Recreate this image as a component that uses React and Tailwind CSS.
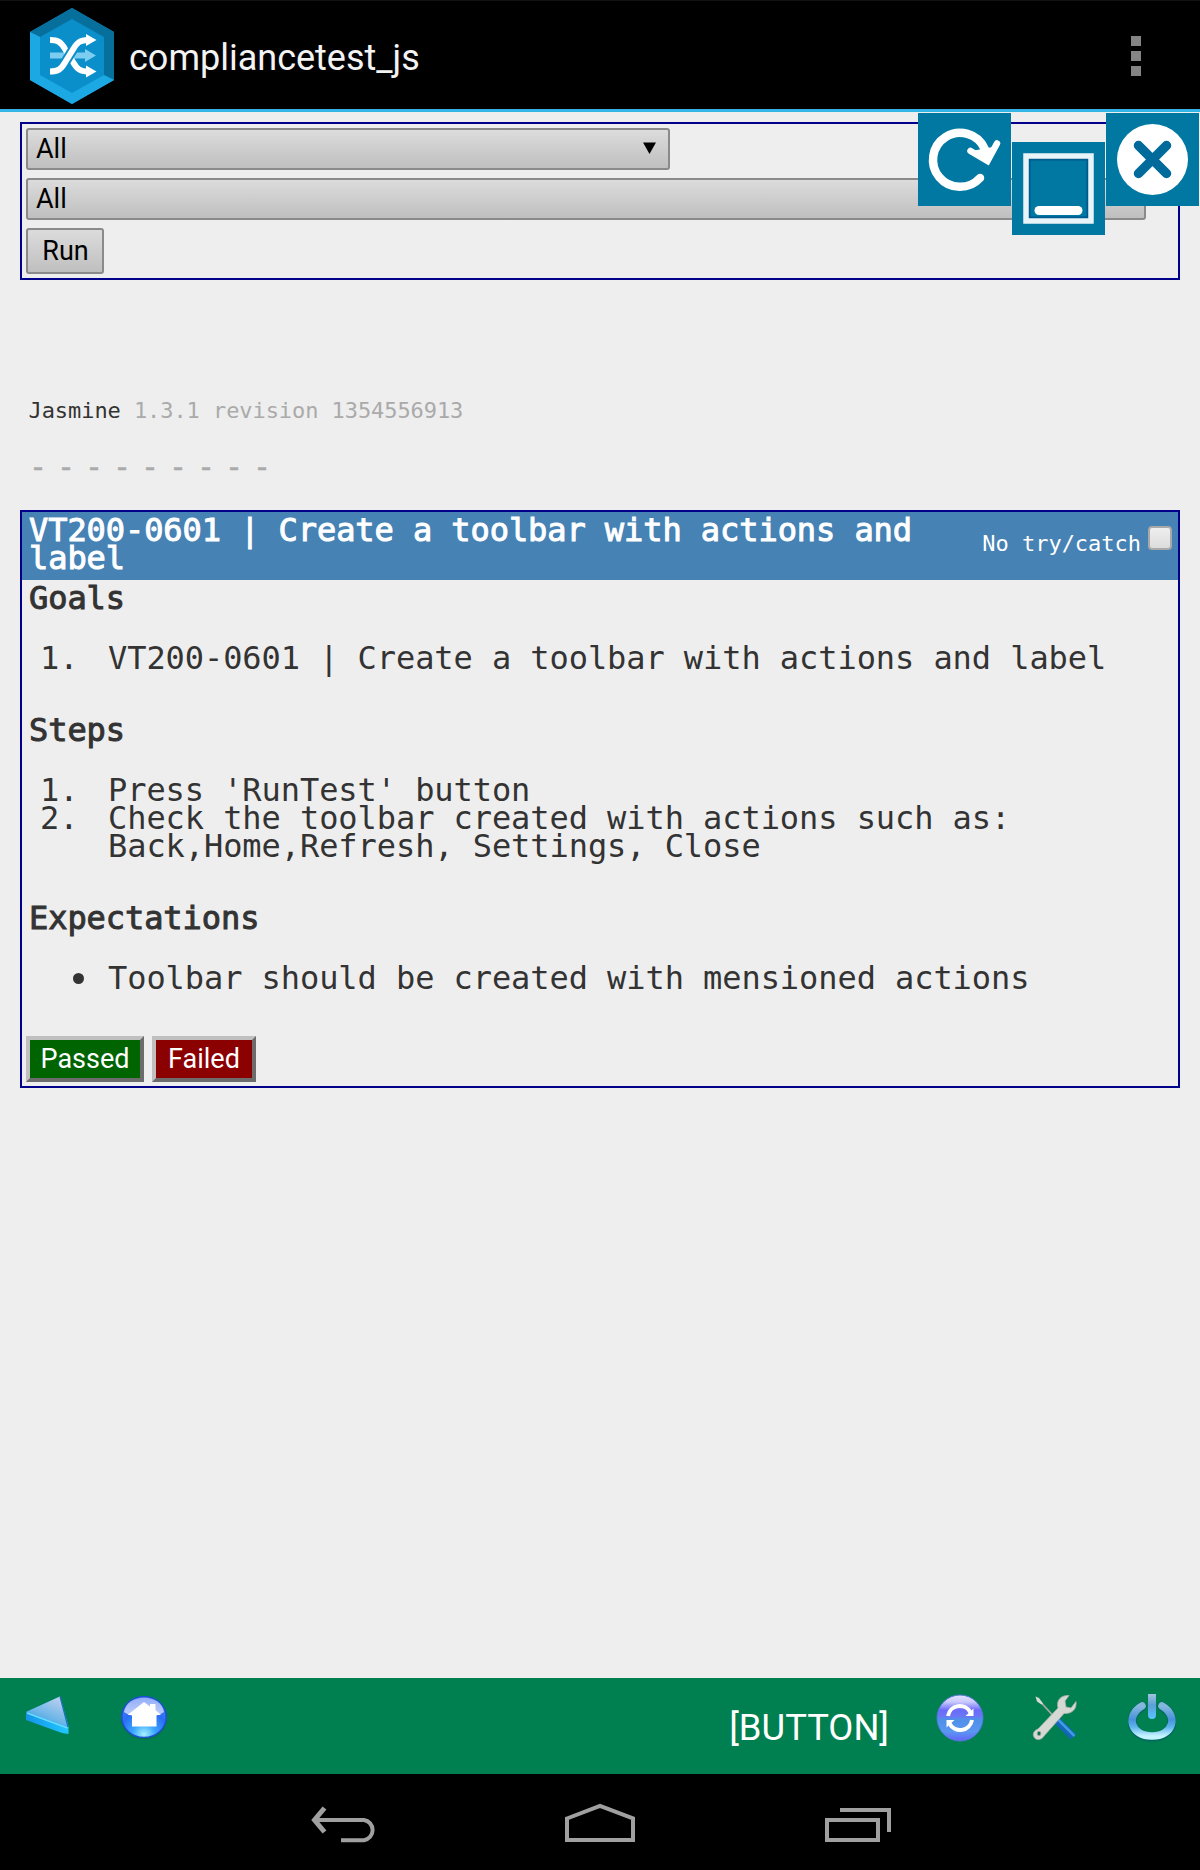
import React from "react";

function AppLogo() {
  return (
    <svg width="84" height="96" viewBox="0 0 84 96" className="mt-0.5 block">
      <polygon points="42,0 84,24 84,72 42,96 0,72 0,24" fill="#0a8fcb" />
      <polygon points="42,0 84,24 84,72 74,67 74,29 42,11 10,29 0,24" fill="#066f9c" />
      <polygon points="0,24 10,29 10,67 42,85 74,67 84,72 42,96 0,72" fill="#1ca9e3" />
      <g fill="none" strokeWidth="6">
        <path d="M20 47.500H58" stroke="#7ccdf0" />
        <path d="M55 41l11 6.500l-11 6.500z" fill="#7ccdf0" stroke="none" />
        <path d="M20 32c8 0 11 2 15 9l8 13c4 7 7 9.500 15 9.500" stroke="#fff" />
        <path d="M20 63.500c8 0 11-2 15-9l8-13c4-7 7-9.500 15-9.500" stroke="#0a8fcb" strokeWidth="10" strokeDasharray="0 18 24 60" />
        <path d="M20 63.500c8 0 11-2 15-9l8-13c4-7 7-9.500 15-9.500" stroke="#fff" />
      </g>
      <path d="M56 26l10.500 6l-10.500 6z M56 57.500l10.500 6l-10.500 6z" fill="#fff" />
    </svg>
  );
}

function ReloadButton() {
  return (
    <button className="size-[93px] bg-[#0078a2]">
      <svg width="93" height="93" viewBox="0 0 93 93" fill="none" stroke="#fff" strokeLinecap="round" className="block">
        <path d="M62 65A27 27 0 1 1 66.500 35.500L69.500 43" strokeWidth="8.500" />
        <path d="M52.500 38L69.500 48L79 30.500" strokeWidth="6.500" strokeLinejoin="miter" />
        <path d="M58.500 38L69.500 46L74.500 35z" fill="#fff" strokeWidth="2" />
      </svg>
    </button>
  );
}

function MinimizeButton() {
  return (
    <button className="mt-[29px] size-[93px] bg-[#0078a2]">
      <svg width="93" height="93" viewBox="0 0 93 93" fill="none" className="block">
        <rect x="17" y="17" width="59" height="59" stroke="#00598f" strokeWidth="3" />
        <rect x="14" y="14" width="65" height="65" stroke="#e9f4f8" strokeWidth="5.500" />
        <path d="M27 68.500H66" stroke="#fff" strokeWidth="9" strokeLinecap="round" />
      </svg>
    </button>
  );
}

function CloseButton() {
  return (
    <button className="size-[93px] bg-[#0078a2]">
      <svg width="93" height="93" viewBox="0 0 93 93" className="block">
        <circle cx="46.500" cy="46.500" r="35.500" fill="#fff" />
        <path d="M32.500 32.500L60.500 60.500M60.500 32.500L32.500 60.500" stroke="#006a9b" strokeWidth="9.500" strokeLinecap="round" />
      </svg>
    </button>
  );
}

function SelectBox({ className, arrow }) {
  return (
    <div className={"flex h-[42px] items-center justify-between rounded-[3px] border-2 border-[#8a8a8a] bg-linear-to-b from-[#dcdcdc] to-[#bfbfbf] pr-3 pl-2 text-[27px] leading-[38px] text-black " + className}>
      <span>All</span>
      {arrow && (
        <svg width="13" height="12" viewBox="0 0 13 12" className="mb-0.5">
          <path d="M0 0.500H13L6.500 12z" fill="#000" />
        </svg>
      )}
    </div>
  );
}

function Heading({ children, className }) {
  return <h3 className={"pl-px [-webkit-text-stroke:1px_currentColor] " + className}>{children}</h3>;
}

function BackIcon() {
  return (
    <svg width="48" height="48" viewBox="0 0 48 48" className="block">
      <defs>
        <linearGradient id="backTop" x1="0" y1="1" x2="0.600" y2="0">
          <stop offset="0" stopColor="#1e8fe6" />
          <stop offset="0.500" stopColor="#6db6e8" />
          <stop offset="1" stopColor="#b5cdec" />
        </linearGradient>
        <linearGradient id="backSide" x1="0" y1="0" x2="1" y2="0">
          <stop offset="0" stopColor="#1593ea" />
          <stop offset="1" stopColor="#20c8ff" />
        </linearGradient>
      </defs>
      <path d="M2 18L36 2.500L44.500 32V40L38 39L2 26z" fill="url(#backSide)" />
      <path d="M2 18L36 2.500L44 33z" fill="url(#backTop)" />
      <path d="M36 2.500L44 33" stroke="#1a6fc4" strokeWidth="1.200" />
      <path d="M3 19L43.500 34" stroke="#6bdcff" strokeWidth="1.500" />
    </svg>
  );
}

function HomeIcon() {
  return (
    <svg width="48" height="48" viewBox="0 0 48 48" className="block">
      <defs>
        <radialGradient id="homeFill" cx="0.500" cy="0.920" r="0.850">
          <stop offset="0" stopColor="#a5f2ff" />
          <stop offset="0.300" stopColor="#3ba6ff" />
          <stop offset="0.650" stopColor="#2a6df4" />
          <stop offset="1" stopColor="#4a7df0" />
        </radialGradient>
        <linearGradient id="homeShine" x1="0" y1="0" x2="0" y2="1">
          <stop offset="0" stopColor="#93adf8" />
          <stop offset="1" stopColor="#c5d4fc" />
        </linearGradient>
      </defs>
      <ellipse cx="24" cy="24" rx="23" ry="21.500" fill="#0a5a50" opacity="0.500" />
      <ellipse cx="24" cy="23" rx="22.300" ry="20.500" fill="url(#homeFill)" stroke="#1c50cf" strokeWidth="1.500" />
      <path d="M4 18C7 -1 41 -1 44 18C34 25 14 25 4 18z" fill="url(#homeShine)" />
      <path d="M24 8L30 12.500V10H35.500V16L41 21H36.500V32.500H12V21H7.500z" fill="#fff" />
    </svg>
  );
}

function RefreshIcon() {
  return (
    <svg width="48" height="48" viewBox="0 0 48 48" className="block">
      <defs>
        <linearGradient id="refreshFill" x1="0" y1="0" x2="0" y2="1">
          <stop offset="0" stopColor="#e2e2ff" />
          <stop offset="0.150" stopColor="#c9c9ff" />
          <stop offset="0.330" stopColor="#6a6af8" />
          <stop offset="0.470" stopColor="#6a78f4" />
          <stop offset="0.520" stopColor="#4f90e8" />
          <stop offset="0.800" stopColor="#5b96f2" />
          <stop offset="1" stopColor="#6464fa" />
        </linearGradient>
      </defs>
      <circle cx="24" cy="24" r="23" fill="url(#refreshFill)" stroke="#5577d8" strokeWidth="1" />
      <path d="M12 22A12 12 0 0 1 34.500 18.500M36 26A12 12 0 0 1 13.500 29.500" fill="none" stroke="#fff" strokeWidth="4" />
      <path d="M37.500 14.500V22H29.500zM10.500 33.500V26H18.500z" fill="#fff" />
    </svg>
  );
}

function ToolsIcon() {
  return (
    <svg width="48" height="48" viewBox="0 0 48 48" className="block">
      <path d="M5 4L24 25" stroke="#a9a9a5" strokeWidth="1.800" />
      <path d="M3.500 2.500L7 4L11 9.500L9.500 10.500L5 7.500z" fill="#d8dad6" />
      <path d="M23.500 25L41.500 43" stroke="#1566b4" strokeWidth="7.500" />
      <path d="M24.500 24L42.500 42" stroke="#3f9be4" strokeWidth="2.500" />
      <path d="M26 14C24 6 29 1 37 1.500L33 7L34 13L39 14L44 7.500C45 15 40 20 32 19.500L12 42C10 46 4 47 2 43C0 39 3 36 6 35z" fill="#d6d8d4" stroke="#aeb0ac" strokeWidth="0.800" />
      <ellipse cx="7" cy="39.500" rx="1.800" ry="2.200" fill="#087748" stroke="#a5a7a3" strokeWidth="0.800" />
    </svg>
  );
}

function PowerIcon() {
  return (
    <svg width="48" height="48" viewBox="0 0 48 48" className="block">
      <defs>
        <linearGradient id="ringFill" x1="0" y1="0" x2="0" y2="1">
          <stop offset="0" stopColor="#86b8df" />
          <stop offset="0.450" stopColor="#4792d8" />
          <stop offset="0.700" stopColor="#5fb4ee" />
          <stop offset="1" stopColor="#c5f3ff" />
        </linearGradient>
        <linearGradient id="stemFill" x1="0" y1="0" x2="0" y2="1">
          <stop offset="0" stopColor="#a0c4e0" />
          <stop offset="0.450" stopColor="#5a9fd6" />
          <stop offset="1" stopColor="#5cc3ff" />
        </linearGradient>
      </defs>
      <path d="M14 12.500C-3 23 3 43 24 43C45 43 51 23 34 12.500" fill="none" stroke="#075d68" strokeWidth="9.500" strokeLinecap="round" opacity="0.600" />
      <path d="M14 12C-3 22 3 42 24 42C45 42 51 22 34 12" fill="none" stroke="url(#ringFill)" strokeWidth="7.500" strokeLinecap="round" />
      <path d="M20 0H28V21a4 4 0 0 1-8 0z" fill="url(#stemFill)" />
    </svg>
  );
}

export default function App() {
  return (
    <div className="relative flex h-[1870px] w-[1200px] flex-col overflow-hidden bg-[#eeeeee] font-['Roboto',sans-serif]">
      <header className="flex h-28 shrink-0 items-center justify-between border-t border-b-[3px] border-t-[#111] border-b-[#33b5e5] bg-black pr-[59px] pl-[30px]">
        <div className="flex items-center gap-[15px]">
          <AppLogo />
          <h1 className="pt-[5px] text-[36px] leading-[44px] text-[#f3f3f3]">compliancetest_js</h1>
        </div>
        <div className="flex flex-col gap-[5px] pt-0.5">
          <i className="size-2.5 bg-[#858585]" />
          <i className="size-2.5 bg-[#858585]" />
          <i className="size-2.5 bg-[#858585]" />
        </div>
      </header>

      <main className="flex-1 px-5 pt-2.5 font-['Droid_Sans_Mono','DejaVu_Sans_Mono',monospace] text-[#333]">
        <section className="flex h-[158px] flex-col items-start gap-2 border-2 border-[#00008b] p-1 font-['Roboto',sans-serif]">
          <SelectBox className="w-[644px]" arrow />
          <SelectBox className="w-[1120px]" />
          <button className="h-[46px] w-[78px] rounded-[3px] border-2 border-[#8a8a8a] bg-linear-to-b from-[#dcdcdc] to-[#bfbfbf] pl-px text-[27px] leading-[40px] text-black">Run</button>
        </section>

        <p className="mt-[117px] pl-[8.500px] text-[22px] leading-[28px] tracking-[-0.070px] whitespace-pre">
          Jasmine <span className="text-[#aaa]">1.3.1 revision 1354556913</span>
        </p>
        <p className="mt-[28px] pl-[9px] text-[30px] leading-[28px] tracking-[-4.060px] whitespace-pre text-[#aaa] [-webkit-text-stroke:0.500px_#aaa]">- - - - - - - - -</p>

        <section className="mt-[29px] h-[578px] border-2 border-[#00008b] text-[32px] leading-[28px] tracking-[-0.070px]">
          <div className="flex h-[68px] justify-between bg-[#4682b4] pt-[4px] pr-1.5 pl-[7px] text-white">
            <h2 className="w-[930px] [-webkit-text-stroke:1px_currentColor]">VT200-0601 | Create a toolbar with actions and label</h2>
            <label className="flex shrink-0 gap-[7px] pt-[14px] text-[22px] tracking-[-0.020px]">
              <span className="whitespace-nowrap">No try/catch</span>
              <i className="-mt-[4px] h-6 w-6 rounded-[4px] border-2 border-[#a9a9a9] bg-linear-to-b from-[#efefef] to-[#dcdcdc]" />
            </label>
          </div>
          <div className="pt-[4px] pl-1.5">
            <Heading>Goals</Heading>
            <div className="mt-8 flex">
              <span className="w-20 pl-3">1.</span>
              <p>VT200-0601 | Create a toolbar with actions and label</p>
            </div>
            <Heading className="mt-11">Steps</Heading>
            <div className="mt-8 flex">
              <span className="w-20 pl-3">1.</span>
              <p>Press 'RunTest' button</p>
            </div>
            <div className="flex">
              <span className="w-20 pl-3">2.</span>
              <p>Check the toolbar created with actions such as:<br />Back,Home,Refresh, Settings, Close</p>
            </div>
            <Heading className="mt-11">Expectations</Heading>
            <div className="mt-8 flex">
              <span className="flex w-20 items-center pl-[45px]"><i className="size-[11px] rounded-full bg-[#333]" /></span>
              <p>Toolbar should be created with mensioned actions</p>
            </div>
          </div>
          <div className="mt-[44px] flex gap-2 pl-1 font-['Roboto',sans-serif] text-[27px] tracking-normal text-white">
            <button className="h-[46px] w-[118px] border-4 border-t-[#c0c0c0] border-r-[#6c6c6c] border-b-[#6c6c6c] border-l-[#c0c0c0] bg-[#006400] pt-px leading-[37px]">Passed</button>
            <button className="h-[46px] w-[104px] border-4 border-t-[#c0c0c0] border-r-[#6c6c6c] border-b-[#6c6c6c] border-l-[#c0c0c0] bg-[#8b0000] pt-px leading-[37px]">Failed</button>
          </div>
        </section>
      </main>

      <footer className="flex h-24 shrink-0 items-start justify-between bg-[#008050] pt-4 pr-6 pl-6">
        <div className="flex gap-12">
          <BackIcon />
          <HomeIcon />
        </div>
        <div className="flex">
          <span className="mt-[12px] mr-[47px] text-[36.400px] leading-[44px] text-white">[BUTTON]</span>
          <div className="flex gap-12">
            <RefreshIcon />
            <ToolsIcon />
            <PowerIcon />
          </div>
        </div>
      </footer>

      <nav className="flex h-24 shrink-0 items-start justify-between bg-black pt-7 pr-[306px] pl-[310px]">
        <svg width="70" height="44" viewBox="0 0 70 44" fill="none" stroke="#a0a0a0" strokeWidth="4">
          <path d="M5 18H54a10 10.200 0 0 1 0 20.200H31" />
          <path d="M14.500 6L4.500 18L14.500 30" strokeWidth="5" strokeLinejoin="miter" />
        </svg>
        <svg width="74" height="44" viewBox="0 0 74 44" fill="none" stroke="#a0a0a0" strokeWidth="4">
          <path d="M2 16.500L35 4L68 16.500V38H2z" />
        </svg>
        <svg width="70" height="44" viewBox="0 0 70 44" fill="none" stroke="#a0a0a0" strokeWidth="4">
          <rect x="3" y="18" width="51" height="20" />
          <path d="M16 8H65V30" />
        </svg>
      </nav>

      <div className="absolute top-[113px] left-[918px] flex items-start gap-px">
        <ReloadButton />
        <MinimizeButton />
        <CloseButton />
      </div>
    </div>
  );
}
